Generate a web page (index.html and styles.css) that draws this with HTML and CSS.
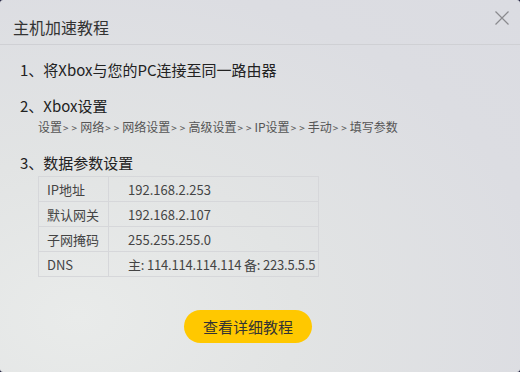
FILE: index.html
```html
<!DOCTYPE html>
<html>

<head>
    <meta charset="utf-8">
    <link rel="stylesheet" href="styles.css">
</head>

<body>
    <div class="dialog">
        <div class="header">
            <div class="title">主机加速教程</div>
            <div class="close">
                <svg width="14" height="14" viewBox="0 0 14 14">
                    <path d="M0.5 0.5 L13.5 13.5 M13.5 0.5 L0.5 13.5" stroke="#8a8a8e" stroke-width="1.2" fill="none"/>
                </svg>
            </div>
        </div>

        <div class="content">
            <div class="step">
                <div class="step-title">1、将Xbox与您的PC连接至同一路由器</div>
            </div>
            <div class="step">
                <div class="step-title">2、Xbox设置</div>
                <div class="step-path">设置<span class="sep">&gt;&gt;</span>网络<span class="sep">&gt;&gt;</span>网络设置<span class="sep">&gt;&gt;</span>高级设置<span class="sep">&gt;&gt;</span>IP设置<span class="sep">&gt;&gt;</span>手动<span class="sep">&gt;&gt;</span>填写参数</div>
            </div>
            <div class="step">
                <div class="step-title">3、数据参数设置</div>
                <table class="params">
                    <tr><td>IP地址</td><td>192.168.2.253</td></tr>
                    <tr><td>默认网关</td><td>192.168.2.107</td></tr>
                    <tr><td>子网掩码</td><td>255.255.255.0</td></tr>
                    <tr><td>DNS</td><td class="dns">主: 114.114.114.114 备: 223.5.5.5</td></tr>
                </table>
            </div>
        </div>

        <div class="footer">
            <div class="btn">查看详细教程</div>
        </div>
    </div>
</body>

</html>
```

FILE: styles.css
```css
/* General Styling */
body {
    margin: 0;
    background: #1c1c3a;
    font-family: "Microsoft YaHei", "Noto Sans CJK SC", sans-serif;
    color: #333;
}

.dialog {
    width: 520px;
    height: 372px;
    border-radius: 3px;
    overflow: hidden;
    background: radial-gradient(ellipse at 15% 85%, #e9ebea 0%, #e2e4e4 35%, #dcdde2 75%, #dbdce2 100%);
    display: flex;
    flex-direction: column;
}

/* Header */
.header {
    height: 45px;
    border-bottom: 1px solid #cfd0d4;
    display: flex;
    align-items: center;
    justify-content: space-between;
    padding: 0 11px 0 13px;
    box-sizing: border-box;
}

.title {
    font-size: 16px;
    color: #333;
    margin-top: 9px;
}

.close {
    width: 14px;
    height: 14px;
    margin-top: -8px;
    cursor: pointer;
}

.close svg {
    display: block;
}

/* Steps */
.content {
    padding: 14px 0 0 20px;
}

.step {
    margin-bottom: 14px;
}

.step-title {
    font-size: 15px;
    line-height: 22px;
    color: #222;
}

.step-path {
    font-size: 12px;
    line-height: 20px;
    color: #555;
    margin-left: 18px;
    white-space: nowrap;
}

.step-path .sep {
    font-size: 10px;
    letter-spacing: 3px;
    margin-left: 1px;
}

/* Params table */
.params {
    margin-left: 18px;
    margin-top: 2px;
    width: 281px;
    table-layout: fixed;
    border-collapse: collapse;
    font-size: 13px;
    color: #444;
    white-space: nowrap;
}

.params td {
    border: 1px solid #d6d7da;
    height: 24px;
    padding: 0 0 0 8px;
}

.params td:first-child {
    width: 61px;
}

.params td:last-child {
    padding-left: 19px;
}

.params .dns {
    letter-spacing: -0.2px;
}

/* Footer button */
.footer {
    display: flex;
    justify-content: center;
    margin-top: 19px;
    padding-right: 24px;
}

.btn {
    width: 128px;
    height: 33px;
    line-height: 33px;
    border-radius: 17px;
    background: #ffc800;
    color: #333;
    font-size: 15px;
    text-align: center;
    cursor: pointer;
}
```
